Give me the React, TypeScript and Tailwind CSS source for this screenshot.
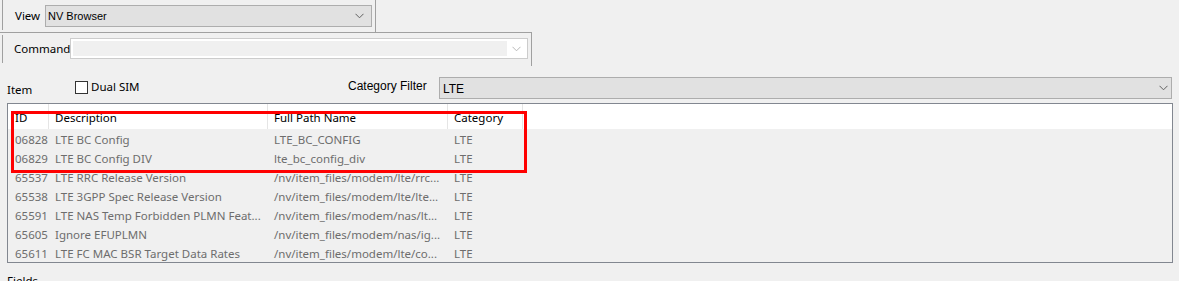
import React from "react";

type Row = { id: string; desc: string; path: string; cat: string };

const rows: Row[] = [
  { id: "06828", desc: "LTE BC Config", path: "LTE_BC_CONFIG", cat: "LTE" },
  { id: "06829", desc: "LTE BC Config DIV", path: "lte_bc_config_div", cat: "LTE" },
  { id: "65537", desc: "LTE RRC Release Version", path: "/nv/item_files/modem/lte/rrc...", cat: "LTE" },
  { id: "65538", desc: "LTE 3GPP Spec Release Version", path: "/nv/item_files/modem/lte/lte...", cat: "LTE" },
  { id: "65591", desc: "LTE NAS Temp Forbidden PLMN Feat...", path: "/nv/item_files/modem/nas/lt...", cat: "LTE" },
  { id: "65605", desc: "Ignore EFUPLMN", path: "/nv/item_files/modem/nas/ig...", cat: "LTE" },
  { id: "65611", desc: "LTE FC MAC BSR Target Data Rates", path: "/nv/item_files/modem/lte/co...", cat: "LTE" },
];

function Chevron({ color = "#606060" }: { color?: string }) {
  return (
    <svg width="9" height="6" viewBox="0 0 9 6" className="shrink-0">
      <polyline points="0.5,0.8 4.5,4.8 8.5,0.8" fill="none" stroke={color} strokeWidth="1" />
    </svg>
  );
}

const cols = "grid grid-cols-[41px_219px_180px_75px_1fr]";

export default function App() {
  return (
    <div className="relative h-[281px] w-[1179px] overflow-hidden bg-[#f0f0f0] font-['Noto_Sans','Segoe_UI',sans-serif] text-[11.5px] text-black">
      {/* View */}
      <div className="flex h-[32px] w-[376px] border-r border-[#a0a0a0]">
        <span className="ml-[2px] h-[30px] w-px bg-[#a0a0a0]" />
        <span className="ml-[12px] mt-[8px] w-[30px] leading-[16px]">View</span>
        <div className="mt-[5px] flex h-[22px] w-[327px] items-center border border-[#adadad] bg-[#e1e1e1] pl-[2px] pr-[7px] font-['Liberation_Sans',sans-serif] text-[11px]">
          <span className="flex-1">NV Browser</span>
          <Chevron />
        </div>
      </div>

      {/* Command */}
      <div className="flex h-[34px] w-[532px] border-r border-t border-[#a0a0a0]">
        <span className="ml-[2px] mt-[2px] h-[28px] w-px bg-[#a0a0a0]" />
        <span className="ml-[11px] mt-[8px] w-[56px] leading-[16px]">Command</span>
        <div className="mt-[5px] flex h-[21px] w-[458px] items-stretch border border-[#cccccc] bg-white p-[2px]">
          <div className="flex-1 bg-[#f0f0f0]" />
          <div className="flex w-[18px] items-center justify-center">
            <Chevron color="#b8b8b8" />
          </div>
        </div>
      </div>

      {/* Item / Category filter */}
      <div className="mt-[10px] flex h-[23px] pl-[7px] pr-[7px]">
        <div className="flex w-[341px]">
          <span className="mt-[6px] w-[68px] leading-[16px]">Item</span>
          <span className="mt-[5px] h-[13px] w-[13px] border border-[#333333] bg-white" />
          <span className="ml-[3px] mt-[3px] leading-[16px]">Dual SIM</span>
        </div>
        <span className="w-[91px] pt-[2px] font-['Liberation_Sans',sans-serif] text-[12px] leading-[16px]">
          Category Filter
        </span>
        <div className="mt-px flex h-[22px] flex-1 items-center border border-[#adadad] bg-[#e1e1e1] pl-[3px] pr-[3px] font-['Liberation_Sans',sans-serif] text-[12px]">
          <span className="flex-1 pt-px">LTE</span>
          <Chevron />
        </div>
      </div>

      {/* Item list */}
      <div className="ml-[7px] mt-[4px] h-[160px] w-[1166px] border border-[#828790] bg-[#f0f0f0]">
        <div className={`${cols} h-[25px] bg-white`}>
          {["ID", "Description", "Full Path Name", "Category"].map((h, i) => (
            <div
              key={h}
              className={`flex items-center border-r border-[#e5e5e5] pt-[2px] ${i === 0 ? "pl-[7px]" : "pl-[6px]"}`}
            >
              {h}
            </div>
          ))}
          <div />
        </div>
        {rows.map((r) => (
          <div key={r.id} className={`${cols} h-[19px] items-center pt-[2px] text-[#6d6d6d]`}>
            <span className="pl-[7px]">{r.id}</span>
            <span className="whitespace-nowrap pl-[6px]">{r.desc}</span>
            <span className="whitespace-nowrap pl-[6px]">{r.path}</span>
            <span className="pl-[6px]">{r.cat}</span>
            <span />
          </div>
        ))}
      </div>

      <div className="mt-[10px] pl-[7px] leading-[16px]">Fields</div>

      {/* annotation */}
      <div className="pointer-events-none absolute left-[11px] top-[111px] h-[62px] w-[516px] border-[3px] border-[#ff0000]" />
    </div>
  );
}
